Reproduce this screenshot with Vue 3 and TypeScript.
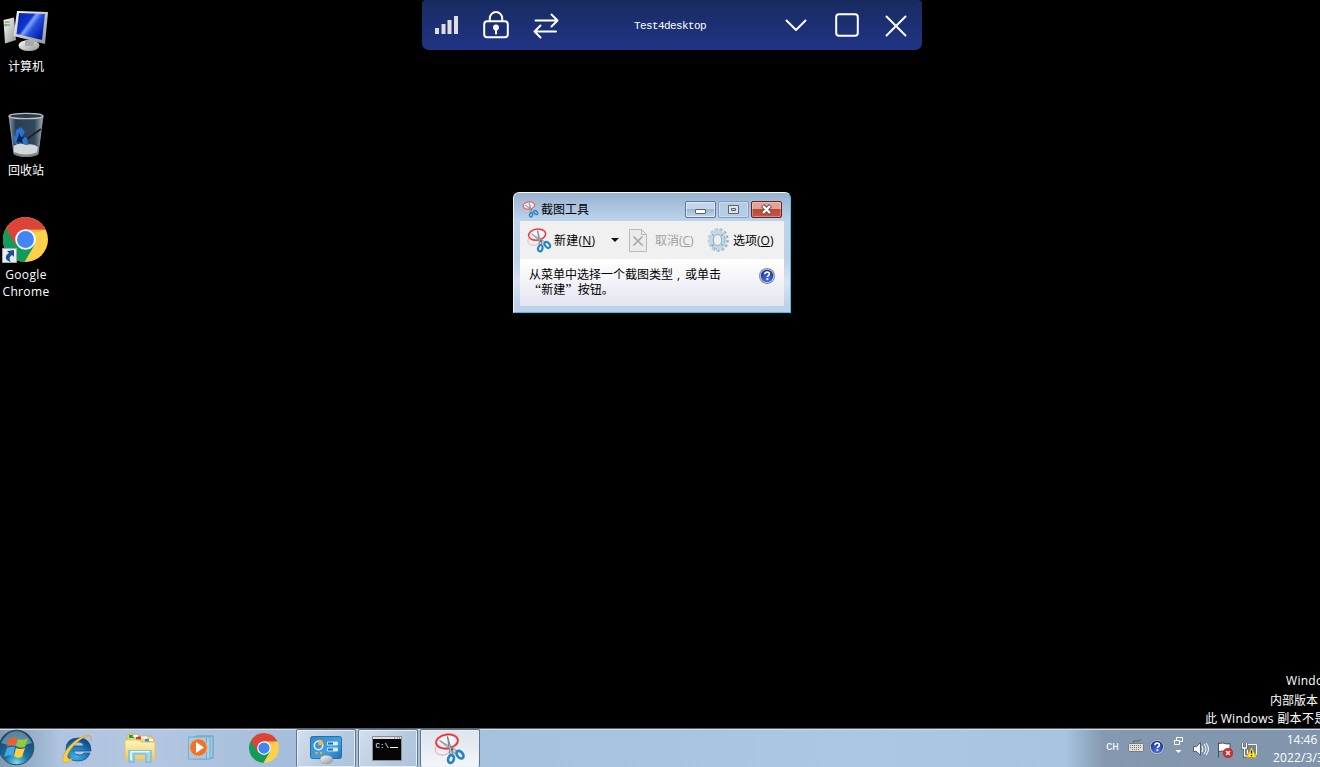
<script setup lang="ts">
interface Shortcut { id: string; lines: string[]; top: number }
const shortcuts: Shortcut[] = [
  { id: 'computer', lines: ['计算机'], top: 8 },
  { id: 'bin', lines: ['回收站'], top: 112 },
  { id: 'chrome', lines: ['Google', 'Chrome'], top: 216 },
]
const pinned: string[] = ['ie', 'folder', 'player', 'chrome']
const running: string[] = ['panel', 'console', 'snip']
</script>

<template>
  <main class="desktop">
    <svg class="defs" aria-hidden="true">
      <defs>
        <linearGradient id="screen" x1="0" y1="0" x2="1" y2=".7"><stop offset="0" stop-color="#0a22a8" /><stop offset=".42" stop-color="#1034d0" /><stop offset=".5" stop-color="#7da3f6" /><stop offset=".65" stop-color="#2450de" /><stop offset="1" stop-color="#0718a0" /></linearGradient>
        <linearGradient id="silver" x1="0" y1="0" x2="1" y2="1"><stop stop-color="#fff" /><stop offset="1" stop-color="#8f9494" /></linearGradient>
        <linearGradient id="glass" x1="0" y1="0" x2="1" y2="0"><stop stop-color="#8498a6" /><stop offset=".2" stop-color="#283e50" /><stop offset=".75" stop-color="#32495a" /><stop offset="1" stop-color="#9eabb5" /></linearGradient>
        <radialGradient id="orb" cx=".5" cy=".95" r=".85"><stop stop-color="#6be0f2" /><stop offset=".4" stop-color="#1f70a2" /><stop offset="1" stop-color="#174267" /></radialGradient>
        <radialGradient id="blueE" cx=".4" cy=".8" r=".8"><stop stop-color="#3bb4ea" /><stop offset="1" stop-color="#0e4388" /></radialGradient>
        <linearGradient id="yellow" x1="0" y1="0" x2="0" y2="1"><stop stop-color="#fff6be" /><stop offset="1" stop-color="#e9c967" /></linearGradient>
        <radialGradient id="helpBlue" cx=".5" cy=".8" r=".8"><stop stop-color="#4d74ea" /><stop offset="1" stop-color="#142d94" /></radialGradient>
        <linearGradient id="panelBlue" x1="0" y1="0" x2="1" y2="1"><stop stop-color="#2f8bcf" /><stop offset=".6" stop-color="#479fdc" /><stop offset="1" stop-color="#1f6fb8" /></linearGradient>
      </defs>

      <symbol id="computer" viewBox="0 0 48 48">
        <path d="M3.5 12 14 9.500 16 32 5 35.500Z" fill="url(#silver)" /><path d="M4.500 14h5M5 17h5" stroke="#777" /><circle cx="5.500" cy="17" r="1.500" fill="#49dc19" />
        <ellipse cx="29" cy="37.500" rx="10.500" ry="5.500" fill="url(#silver)" /><path d="M25 32h9v6h-9z" fill="#aaa" />
        <path d="M17 3 48 4 45 36 13.500 28Z" fill="url(#silver)" /><path d="M19 5 45 6 42 32 16.500 26Z" fill="url(#screen)" />
      </symbol>

      <symbol id="bin" viewBox="0 0 48 48">
        <path d="M9 4h34l-5 38q-12 5-24 0Z" fill="url(#glass)" stroke="#87949d" />
        <path d="M27 27 41 17" stroke="#15222d" stroke-width="2" />
        <path d="m16 18 5-3 4 5-3 5-7 1zM13 23l5 3-1 5 4 2-6-1zM22 23l5 3 1 6-5 2-5-1 3-4z" fill="#2d71d4" />
        <path d="m19 21 2 4 4-1-3 4 1 4-4-3-3 1 2-4z" fill="#092344" />
        <path d="M13.500 34q6-4 12-1 8-2 12.500 2l-1 6q-12 5-23 0Z" fill="#d3d7d7" /><path d="M14 40q12 5 24 0v3q-12 4-23 0z" fill="#818788" />
        <ellipse cx="26" cy="4" rx="17" ry="2.700" fill="#273a49" stroke="#bcc3c5" stroke-width="1.300" />
      </symbol>

      <symbol id="chrome" viewBox="0 0 48 48">
        <circle cx="24" cy="24" r="24" fill="#fcd04b" />
        <path d="M3.200 12A24 24 0 0 0 23 48L33.500 30 24 24Z" fill="#119c5b" />
        <path d="M3.200 12A24 24 0 0 1 45.500 13.500H24L13.500 29.500Z" fill="#db4437" />
        <path d="M24 13.500h21.500l-15 4.500z" fill="#e6ae35" opacity=".6" />
        <circle cx="24" cy="24" r="11" fill="#f4f7fb" /><circle cx="24" cy="24" r="9" fill="#4285f4" />
      </symbol>

      <symbol id="ie" viewBox="0 0 32 32">
        <path d="M29 19H11q1 4 6 4 4 0 5-2h6q-3 8-12 8Q4 29 4 17.500 4 6 16.500 6 29 6 29 19ZM11 14h11q-1-4-5.500-4T11 14Z" fill="url(#blueE)" stroke="#115492" stroke-width=".8" fill-rule="evenodd" />
        <path d="M29 9c2-9-7-6-16 0C4 16-2 27 2 30c3 2 7-2 9-4-6 3-7-1-4-6C11 13 21 4 27 4c2 0 3 2 2 5Z" fill="#f8cf3c" stroke="#d69a16" stroke-width=".5" />
      </symbol>

      <symbol id="folder" viewBox="0 0 32 32">
        <path d="M3 4 5 2h7l2 2h13l3 3v16H3z" fill="#ead280" stroke="#d2b45b" /><path d="M5 3h5v3H5z" fill="#18a83c" /><path d="M12 4.500h5v3h-5z" fill="#d93b2c" /><path d="M21 7h5v3h-5z" fill="#3195da" /><path d="M9 3h5v2H9zM17 4.500h6v2h-6zM25 7h4v2h-4z" fill="#fff" />
        <path d="M1 8h14l2 2h14v18H1z" fill="url(#yellow)" stroke="#dec46f" />
        <path d="M5 30V18.500h22V30h-5v-8H10v8z" fill="#a0d9ef" stroke="#66b3d3" /><path d="M6 19.500h20M7 20v8" stroke="#e5faff" stroke-width="1.500" />
      </symbol>

      <symbol id="player" viewBox="0 0 32 32">
        <path d="M10 4h17v22H10z" fill="#a4cee5" stroke="#5d9dbf" /><path d="M7 5h17v22H7z" fill="#a5d3e9" stroke="#6ba8c8" /><path d="M2.500 5h18v22h-18z" fill="#a2cbe4" stroke="#72afd0" />
        <circle cx="12.500" cy="15.500" r="8.800" fill="#ee732c" stroke="#f7b98e" stroke-width="1" /><path d="M10 10v11l8-5.500z" fill="#fff" />
      </symbol>

      <symbol id="panel" viewBox="0 0 32 32">
        <rect x=".5" y="3.500" width="31" height="22" rx="2" fill="url(#panelBlue)" stroke="#2372ae" />
        <circle cx="8.500" cy="12.500" r="4.200" fill="none" stroke="#e3f5ff" stroke-width="1.500" /><path d="M8.500 12V6.500q5 0 5 5.500z" fill="#ffb63e" />
        <path d="M17.500 9h10v3h-10zM17.500 15h10v3h-10z" fill="#226dab" stroke="#bae4ff" /><path d="M23 9h4v3h-4zM23 15h4v3h-4z" fill="#d3f2ff" />
        <circle cx="6.500" cy="20" r="1.200" fill="#ffad41" /><circle cx="11" cy="20" r="1.200" fill="#ffad41" />
        <ellipse cx="16.500" cy="26.500" rx="6.500" ry="4.300" fill="url(#silver)" stroke="#888e94" stroke-width=".5" />
      </symbol>

      <symbol id="snip" viewBox="0 0 32 32">
        <ellipse cx="9" cy="16" rx="8" ry="6" transform="rotate(-12 9 16)" fill="none" stroke="#e3a1a8" stroke-width=".9" />
        <ellipse cx="13" cy="8.500" rx="11" ry="7" transform="rotate(-9 13 8.500)" fill="#f5f8fb" fill-opacity=".8" stroke="#f3bfc2" stroke-width="2.800" />
        <ellipse cx="13" cy="8.500" rx="11" ry="7" transform="rotate(-9 13 8.500)" fill="none" stroke="#e4363b" stroke-width="1.600" />
        <path d="M5.500 7.500 23.500 18l-2 3z" fill="#cfd4d9" stroke="#737e87" stroke-width=".8" /><path d="m13.500 3.500 5.500 18-3 1z" fill="#c4cad0" stroke="#606c76" stroke-width=".8" />
        <ellipse cx="17" cy="26" rx="2.800" ry="4" transform="rotate(15 17 26)" fill="none" stroke="#2785c2" stroke-width="2.700" />
        <ellipse cx="26" cy="21.700" rx="2.800" ry="4.300" transform="rotate(-40 26 21.700)" fill="none" stroke="#2785c2" stroke-width="2.700" />
        <circle cx="18" cy="16.500" r="1.100" fill="#48555f" />
      </symbol>

      <symbol id="help" viewBox="0 0 16 16">
        <circle cx="8" cy="8" r="8" fill="#858992" /><circle cx="8" cy="8" r="7" fill="#cbd0da" /><circle cx="8" cy="8" r="6.200" fill="url(#helpBlue)" />
        <path d="M5.800 6.300q0-2.200 2.300-2.200t2.300 1.900c0 1.600-2 1.600-2 3" fill="none" stroke="#fff" stroke-width="1.600" /><path d="M7.500 10.200h1.800v1.700H7.500z" fill="#fff" />
      </symbol>
    </svg>

    <div v-for="s in shortcuts" :key="s.id" class="shortcut" :style="{ top: s.top + 'px' }">
      <div class="shortcut-art">
        <svg :class="['shortcut-icon', s.id]"><use :href="'#' + s.id" /></svg>
        <svg v-if="s.id === 'chrome'" class="link-arrow" viewBox="0 0 15 15"><path d="M.5.5h14v14H.5z" fill="#e8edf2" stroke="#aaa" /><path d="m5 3 7-1v7l-2-2c-3 2-3 4-1 7-6-1-7-6-2-9z" fill="#174f91" /></svg>
      </div>
      <span v-for="line in s.lines" :key="line" :class="{ latin: s.lines.length > 1 }">{{ line }}</span>
    </div>

    <header class="remote">
      <svg class="bars" viewBox="0 0 24 20"><path d="M0 13h4v6H0zM6.500 9h4v10h-4zM12.500 5h4v14h-4zM19 1h4v18h-4z" fill="#dedede" /></svg>
      <svg class="lock" viewBox="0 0 26 28"><rect x="1.200" y="10.200" width="23.600" height="16" rx="3" /><path d="M6.800 10V7.300a6.200 6.200 0 0 1 12.400 0V10M13 17v5.500" /><circle cx="13" cy="16.500" r="2" fill="#fff" /></svg>
      <svg class="swap" viewBox="0 0 26 26"><path d="M2.500 7.500h22M18.500 1.500l6 6-6 6M23 18.500H1.500m6-6-6 6 6 6" /></svg>
      <span class="host">Test4desktop</span>
      <svg class="chev" viewBox="0 0 22 14"><path d="m1.500 2.500 9.500 9.500 9.500-9.500" /></svg>
      <svg class="max" viewBox="0 0 24 24"><rect x="1.200" y="1.200" width="21.600" height="21.600" rx="2.700" /></svg>
      <svg class="cross" viewBox="0 0 22 22"><path d="m1.500 1.500 19 19m0-19-19 19" /></svg>
    </header>

    <section class="window">
      <div class="titlebar">
        <svg class="title-icon"><use href="#snip" /></svg><strong>截图工具</strong>
        <button class="win-btn"><svg viewBox="0 0 29 15"><rect x="9.500" y="7.500" width="10" height="4" rx=".5" fill="#fff" stroke="#59616c" /></svg></button>
        <button class="win-btn pale"><svg viewBox="0 0 29 15"><path d="M9.500 3.500h10v8h-10zM12.500 6.500h4v2h-4z" fill="#dce4ea" fill-rule="evenodd" stroke="#5c6570" /></svg></button>
        <button class="win-btn red"><svg viewBox="0 0 29 15"><path d="m10.500 3.500 8 8m0-8-8 8" stroke="#59535e" stroke-width="4.200" /><path d="m11 4 7 7m0-7-7 7" stroke="#fff" stroke-width="2.300" /></svg></button>
      </div>
      <div class="client">
        <div class="tools">
          <svg class="tool-snip"><use href="#snip" /></svg><span class="new-label">新建(<u>N</u>)</span><i class="drop" />
          <svg class="cancel-icon" viewBox="0 0 18 23"><path d="M.5.5h12l5 5v17H.5z" fill="#ebebeb" stroke="#b9b9b9" /><path d="M12.500.5v5h5" fill="none" stroke="#b9b9b9" /><path d="m4.500 7.500 9 9m0-9-9 9" stroke="#a9a9a9" stroke-width="1.700" /></svg>
          <span class="cancel-label">取消(<u>C</u>)</span>
          <svg class="gear" viewBox="0 0 22 24"><g fill="none"><ellipse cx="11.500" cy="12" rx="8.500" ry="10" stroke="#8ca9be" stroke-width="3.400" stroke-dasharray="2.400 2.060" /><ellipse cx="10.500" cy="12" rx="8.300" ry="9.900" stroke="#b6cfe1" stroke-width="3" stroke-dasharray="2.400 2.010" /><ellipse cx="10.500" cy="12" rx="6.400" ry="7.900" stroke="#c3d9e9" stroke-width="4" /><ellipse cx="10.500" cy="12" rx="4.200" ry="5.500" fill="#eef0f1" stroke="#8ba8bd" /><path d="M4 16q2 5 6 5M17 8q2 4 0 8" stroke="#9cbbd0" /><circle cx="6" cy="7" r=".7" fill="#54758d" /><circle cx="15" cy="7" r=".7" fill="#54758d" /><circle cx="6" cy="17" r=".7" fill="#54758d" /><circle cx="15" cy="17" r=".7" fill="#54758d" /></g></svg>
          <span class="option-label">选项(<u>O</u>)</span>
        </div>
        <div class="message"><p><span class="line-one">从菜单中选择一个截图类型<i class="comma">,</i>或单击</span><span class="line-two"><b>“</b>新建<b>”</b>&nbsp; 按钮。</span></p><svg class="help"><use href="#help" /></svg></div>
      </div>
    </section>

    <div class="watermark"><span>Windows 7</span><span>内部版本 7601</span><span>此 Windows 副本不是正版</span></div>

    <footer class="taskbar">
      <div class="start"><svg viewBox="0 0 36 38"><circle cx="16.500" cy="18.500" r="17.300" fill="url(#orb)" stroke="#264e6a" /><path d="M1 14Q7 2 16.500 2T32 14Q17 20 1 14Z" fill="#d2edf7" opacity=".38" />
        <path d="M9 10q4-3 8-1l-2 8q-4-2-8 1z" fill="#ef602b" /><path d="M18 10q5 2 10-1l-3 9q-5 2-9-1z" fill="#94c83d" /><path d="M7 19q4-2 8-1l-2 9q-4-2-9 1z" fill="#45a7e5" /><path d="M16 19q4 2 9 0l-3 9q-5 2-8-1z" fill="#ffd03d" /></svg></div>
      <div class="pins"><div v-for="id in pinned" :key="id" class="pin"><svg :class="['task-icon', id]"><use :href="'#' + id" /></svg></div></div>
      <div class="tasks"><div v-for="id in running" :key="id" :class="['task', id]">
        <svg v-if="id === 'console'" class="task-icon" viewBox="0 0 32 32"><path d="M1.500 3.500h29v24h-29z" fill="#050505" stroke="#8a8f92" /><path d="M2 4h28v2H2z" fill="#dce0e2" /><path d="M23 5h1m2 0h1m1 0h1" stroke="#4f5355" /><text x="4.500" y="14.500" fill="#fff" font-family="Liberation Mono, monospace" font-size="7.500">C:\</text><path d="M19 14.500h8" stroke="#fff" /></svg>
        <svg v-else class="task-icon"><use :href="'#' + id" /></svg>
      </div></div>
      <div class="tray">
        <span class="lang">CH</span>
        <svg class="keyboard" viewBox="0 0 16 14"><path d="M5 4q0-3 3-2 4 1 5-2" fill="none" stroke="#59646d" /><rect x=".5" y="4.500" width="15" height="8" rx="1" fill="#e4e0d8" stroke="#777b7e" /><path d="M2 6.500h12M2 8.500h12M4 10.500h8" stroke="#777" stroke-dasharray="1 1" /></svg>
        <svg class="tray-help"><use href="#help" /></svg>
        <svg class="restore" viewBox="0 0 9 18"><path d="M2.500 3V.5h6v4H6M.5 3.500h5v4h-5z" fill="none" stroke="#fff" /><path d="M1.500 13h6l-3 3z" fill="#fff" /></svg>
        <svg class="speaker" viewBox="0 0 16 16"><path d="M.5 5.500h3l4-4v13l-4-4h-3z" fill="#f5f6f6" stroke="#57616b" /><path d="M9 5q2 3 0 6m2-8q4 5 0 10m2-11q5 6 0 12" fill="none" stroke="#fff" /></svg>
        <svg class="flag" viewBox="0 0 16 16"><path d="M1.500.5v15M2 1.500q4-1 6 0t5 0v8q-3 1-5 0t-6 0" fill="#fff" stroke="#4b535c" /><circle cx="11" cy="11" r="4.800" fill="#d82925" stroke="#9c2020" stroke-width=".5" /><path d="m9 9 4 4m0-4-4 4" stroke="#fff" stroke-width="1.500" /></svg>
        <svg class="network" viewBox="0 0 16 16"><path d="M6.500 2.500h9v10h-9z" fill="#6e8297" stroke="#f4f4f4" /><g fill="none"><path d="M1.500 1v5h4V1M3.500 6v8h7" stroke="#3e4851" stroke-width="3" /><path d="M1.500 1v5h4V1M3.500 6v8h7" stroke="#fff" stroke-width="1.500" /></g><path d="m10.500 5 5.300 10.500H5.200z" fill="#ffdc29" stroke="#b69110" stroke-width=".6" /><path d="M10.500 8.500v3M10.500 13v1.200" stroke="#222" stroke-width="1.300" /></svg>
        <div class="clock"><time>14:46</time><span>2022/3/31</span></div>
      </div>
    </footer>
  </main>
</template>

<style>
body { margin: 0; overflow: hidden; }
</style>
<style scoped>
* { box-sizing: border-box; }
.desktop { position: relative; width: 1320px; height: 767px; overflow: hidden; background: #000; color: #fff; font: 12px/15px "Open Sans", "Noto Sans CJK SC", sans-serif; }
.defs { position: absolute; width: 0; height: 0; }
svg { display: block; flex: none; }
.shortcut { position: absolute; left: 0; width: 52px; text-align: center; white-space: nowrap; }
.shortcut-art { position: relative; height: 51px; }
.shortcut-icon { width: 48px; height: 48px; }
.shortcut-icon.chrome { width: 45px; height: 45px; margin: 0 0 0 3px; transform: translateY(1px); }
.link-arrow { position: absolute; left: 2px; top: 32px; width: 15px; height: 15px; }
.shortcut span { display: block; height: 17px; }
.shortcut .latin { letter-spacing: .35px; }
.remote { position: absolute; left: 422px; top: 0; width: 500px; height: 50px; display: flex; align-items: center; padding-left: 13px; border-radius: 4px 4px 7px 7px; background: linear-gradient(#182b60, #203486); }
.remote svg { fill: none; stroke: #fff; stroke-width: 2; stroke-linecap: round; stroke-linejoin: round; }
.remote .bars { width: 24px; height: 20px; stroke: none; }
.remote .lock { width: 26px; height: 28px; margin-left: 24px; }
.remote .swap { width: 26px; height: 26px; margin-left: 24px; margin-top: 2px; }
.host { width: 73px; margin: 1px 0 0 75px; font: 11px "Liberation Mono", monospace; letter-spacing: -.6px; white-space: nowrap; }
.remote .chev { width: 22px; height: 14px; margin-left: 78px; }
.remote .max { width: 24px; height: 24px; margin-left: 28px; }
.remote .cross { width: 22px; height: 22px; margin-left: 26px; margin-top: 2px; }
.window { position: absolute; left: 513px; top: 192px; width: 278px; height: 121px; padding: 0 6px 6px; border: 1px solid #35c8e3; border-top-color: #f3f7fa; border-left-color: #edf4fa; border-radius: 6px 6px 0 0; background: linear-gradient(#97b2d0, #bed4ed 28px, #bdd1e9 65px, #d9e3f2 75%, #bcd1ea 95%); color: #000; }
.titlebar { height: 28px; display: flex; align-items: center; padding: 5px 2px 0; }
.title-icon { width: 17px; height: 17px; margin-right: 2px; }
.titlebar strong { width: 144px; margin-right: 0; font-weight: 400; flex: none; }
.win-btn { flex: none; width: 31px; height: 17px; padding: 0; margin-right: 2px; border: 1px solid #5c7898; border-radius: 2px; background: linear-gradient(#c3d5ea 0 48%, #9db7d2 50%, #c2d7ed); box-shadow: inset 0 0 0 1px #ffffff80; }
.win-btn svg { width: 29px; height: 15px; }
.win-btn.pale { border-color: #839fbe; background: #b5cce5; box-shadow: inset 0 0 0 1px #ffffff50; }
.win-btn.red { margin: 0; border-color: #65212d; background: linear-gradient(#e2a394 0 45%, #bf4730 49%, #c95746); box-shadow: inset 0 0 0 1px #ffffff50; }
.titlebar .win-btn:first-of-type { margin-left: 0; }
.client { width: 264px; height: 85px; background: #fff; }
.tools { height: 38px; background: #f0f0f0; display: flex; align-items: center; padding-left: 7px; white-space: nowrap; }
.tool-snip { width: 25px; height: 25px; }
u { text-underline-offset: 1px; }
.new-label { width: 57px; margin-left: 2px; letter-spacing: .25px; }
.drop { border: 4px solid transparent; border-top-color: #111; border-bottom: 0; }
.cancel-icon { width: 18px; height: 23px; margin-left: 10px; }
.cancel-label { width: 52px; margin-left: 8px; color: #a0a0a0; }
.gear { width: 22px; height: 24px; }
.option-label { margin-left: 4px; }
.message { height: 47px; display: flex; background: linear-gradient(#fff, #e5e5f1); padding-left: 9px; }
.message p { width: 230px; margin: 8px 0 0; white-space: nowrap; line-height: 15px; }
.message p > span { display: block; }
.comma { display: inline-block; width: 12px; padding-left: 4px; font-style: normal; }
.line-two { padding-left: 6px; }
.line-two b { font: 14px/12px "Liberation Serif", serif; }
.help { width: 16px; height: 16px; margin-top: 9px; }
.watermark { position: absolute; left: 1205px; top: 673px; width: 180px; white-space: nowrap; }
.watermark span { display: block; height: 19px; letter-spacing: .3px; }
.watermark span:nth-child(1) { padding-left: 81px; height: 20px; }
.watermark span:nth-child(2) { padding-left: 65px; height: 18px; letter-spacing: 0; }
.taskbar { position: absolute; left: 0; bottom: 0; width: 1320px; height: 39px; display: flex; border-top: 1px solid #59616b; box-shadow: inset 0 1px #d1ddec; background: linear-gradient(90deg, #8299ae, #9fb8d1 42px, #b0c4e0 60px, #b3c6e1 155px, #a4bedb 290px, #abc7e4 850px, #a7c4e0 1065px, #8498af 1105px, #8095ac); }
.start { width: 47px; }
.start svg { width: 36px; height: 38px; }
.pins { width: 249px; display: flex; }
.pin { width: 62px; display: flex; align-items: center; justify-content: center; }
.task-icon { width: 32px; height: 32px; }
.task-icon.chrome { width: 30px; height: 30px; margin-right: 0; }
.tasks { display: flex; gap: 2px; }
.task { width: 60px; height: 38px; display: flex; align-items: center; justify-content: center; border: 1px solid #62778d; border-bottom: 0; border-radius: 2px; box-shadow: inset 0 0 0 1px #e5eff9; background: linear-gradient(125deg, #d5dfec, #b4c8de 65%, #afc4db); }
.task.snip { background: linear-gradient(#dce4ed, #f5f6fa); }
.task.console .task-icon { margin-right: 2px; }
.tray { margin-left: 626px; width: 214px; display: flex; align-items: center; }
.lang { flex: none; width: 22px; font: 11px "Liberation Mono", monospace; letter-spacing: -.3px; margin-top: -2px; }
.keyboard { width: 16px; height: 14px; margin-top: -4px; }
.tray-help { width: 16px; height: 16px; margin: -3px 0 0 5px; }
.restore { width: 9px; height: 18px; margin: -5px 0 0 9px; }
.speaker { width: 16px; height: 16px; margin: 1px 0 0 10px; }
.flag { width: 16px; height: 16px; margin: 3px 0 0 8px; }
.network { width: 16px; height: 16px; margin: 3px 0 0 8px; }
.clock { width: 58px; flex: none; margin: 1px 0 0 16px; display: flex; flex-direction: column; align-items: center; line-height: 18px; white-space: nowrap; }
.clock span { letter-spacing: .15px; }
</style>
